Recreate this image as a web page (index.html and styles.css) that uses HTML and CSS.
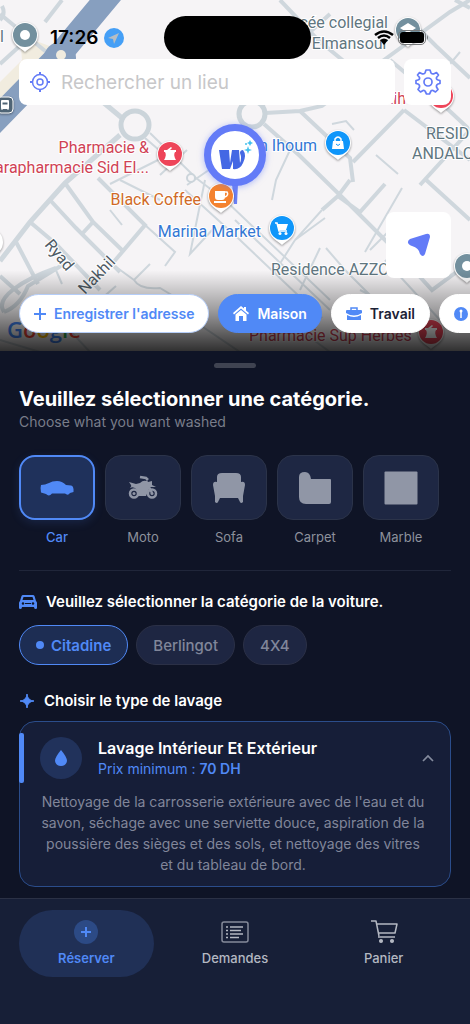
FILE: index.html
```html
<!doctype html>
<html lang="fr">
    <head>
        <meta charset="utf-8" />
        <meta content="width=device-width,initial-scale=1.0" name="viewport" />
        <title>Réserver</title>
        <link rel="stylesheet" href="styles.css">
    </head>
    <body>
        <div class="app">
            <section class="map">
                <svg class="map__canvas" viewBox="0 0 470 351" preserveAspectRatio="xMidYMid slice" role="img" aria-label="Carte">
                    <rect width="470" height="352" fill="#f6f4f6" />
                    <path d="M20 35L55 48L45 90L0 98V82L22 60Z" fill="#f1ecdf" />
                    <!-- streets -->
                    <g class="map__roads">
                        <path d="M0 14L50 55M0 64L34 33M0 20Q6 14 2 6M62 0L45 22" stroke-width="4" />
                        <path d="M104 103L122 118M120 135L65 183L30 222L0 261" stroke-width="5" />
                        <path d="M65 183L93 222L124 252M98 178L145 225L112 264M93 222L81 235M50 200L76 228L120 272M30 222L56 244L100 290M15 240L38 284M0 276L20 294" stroke-width="4" />
                        <path d="M4 312C-6 298 22 280 56 268M4 312Q20 306 28 286L64 264" stroke-width="4" />
                        <path d="M145 138L166 156M150 133L196 178M160 175L187 150M166 156L110 184M187 185L238 150M196 178L225 200L330 300M185 190L240 240L322 318" stroke-width="2" />
                        <path d="M145 225L175 252L165 266M112 264L134 280L150 264M134 280Q140 290 160 288L180 300M120 180L160 200M205 180L190 254L214 228M110 210L122 225M55 268L62 284M116 286L100 300" stroke-width="2" />
                        <path d="M265 113L300 111L322 106L362 76L450 12L470 0M455 0L470 8M300 111L350 158L353 182M353 162L404 110M404 110L470 160M390 60L440 102L470 130M280 0L318 40L362 76M410 20L436 46L470 78M290 50L330 14M262 106L295 70M248 130L232 150" stroke-width="4" />
                        <path d="M332 124L346 121L354 130M376 155L398 174M240 50L260 70" stroke-width="2" />
                        <path d="M420 185L470 130M264 124L300 156L345 200L400 255L432 290L470 262M350 180L338 196L360 212L385 184M338 196L322 210M424 178L470 220" stroke-width="4" />
                        <path d="M272 200L276 180L290 150M240 60L250 78M322 210L295 240L272 276M326 248L345 270L405 330M295 240L325 218M365 252L402 188M370 250L390 230M385 260L440 320M320 248L300 290M450 64L460 52M235 220L330 310M360 290L380 300L366 312" stroke-width="2" />
                        <path d="M0 340L40 352M60 320L90 352M200 325L240 352M300 330L330 352" stroke-width="2" />
                    </g>
                    <g fill="#f6f4f6" stroke="#cbd4da" stroke-width="5">
                        <circle cx="135" cy="125" r="14" />
                        <circle cx="252" cy="114" r="13" />
                        <circle cx="191" cy="178" r="4" stroke-width="2" />
                    </g>
                    <path d="M112 -8L62 52L-10 126" fill="none" stroke="#879fbf" stroke-width="24" />
                    <circle cx="60" cy="58" r="16" fill="#879fbf" />
                    <circle cx="61" cy="55" r="5" fill="#f1ecdf" />

                    <defs>
                        <path id="pin" d="M0 16C-4 12 -13 9 -13 -1A13 13 0 0 1 13 -1C13 9 4 12 0 16Z" />
                    </defs>

                    <g class="map__labels">
                        <text x="0" y="42" fill="#5f7680">l</text>
                        <text x="388" y="28" text-anchor="end" fill="#5f7680">cée collegial</text>
                        <text x="388" y="49" text-anchor="end" fill="#5f7680">o Elmansour</text>
                        <text x="149" y="153" text-anchor="end" fill="#d04255">Pharmacie &amp;</text>
                        <text x="149" y="173" text-anchor="end" fill="#d04255">Parapharmacie Sid El...</text>
                        <text x="201" y="205" text-anchor="end" fill="#d06a27">Black Coffee</text>
                        <text x="261" y="237" text-anchor="end" fill="#3277d4">Marina Market</text>
                        <text x="317" y="151" text-anchor="end" fill="#3277d4">Ain Ihoum</text>
                        <text x="406" y="104" text-anchor="end" fill="#d04255">Fatih</text>
                        <text x="426" y="139" fill="#5f7680">RESIDENCE</text>
                        <text x="412" y="159" fill="#5f7680">ANDALOUS</text>
                        <text x="271" y="275" fill="#5f7680">Residence AZZOUZ</text>
                        <text x="249" y="341" fill="#d04255">Pharmacie Sup Herbes</text>
                        <text transform="translate(44 245) rotate(50)" fill="#4e5a64">Ryad</text>
                        <text transform="translate(85 295) rotate(-46)" fill="#4e5a64">Nakhil</text>
                    </g>
                    <text class="map__google" x="7" y="338"><tspan fill="#4285f4">G</tspan><tspan fill="#ea4335">o</tspan><tspan fill="#fbbc05">o</tspan><tspan fill="#4285f4">g</tspan><tspan fill="#34a853">l</tspan><tspan fill="#ea4335">e</tspan></text>

                    <g class="map__pin" transform="translate(25 36)">
                        <use href="#pin" fill="#fff" />
                        <circle cy="-1" r="12" fill="#73909e" />
                        <circle cy="-1" r="5" fill="#fff" />
                    </g>
                    <g class="map__pin" transform="translate(408 31)">
                        <use href="#pin" fill="#fff" />
                        <circle cy="-1" r="12" fill="#73909e" />
                        <path d="M-8 -3L0 -8L8 -3L0 2ZM-5 1L0 4L5 1V4H-5Z" fill="#fff" />
                    </g>
                    <g class="map__pin" transform="translate(338 144)">
                        <use href="#pin" fill="#fff" />
                        <circle cy="-1" r="12" fill="#0f96fa" />
                        <path d="M-5 -3H5L6 5H-6Z" fill="#fff" />
                        <path d="M-3 -2V-5Q0 -9 3 -5V-2" fill="none" stroke="#fff" stroke-width="1.5" />
                        <path d="M-2 0Q0 3 2 0" fill="none" stroke="#0f96fa" />
                    </g>
                    <g class="map__pin" transform="translate(282 229)">
                        <use href="#pin" fill="#fff" />
                        <circle cy="-1" r="12" fill="#0f96fa" />
                        <path d="M-7 -6H-5L-3 2H5" fill="none" stroke="#fff" stroke-width="1.5" />
                        <path d="M-5 -5H6L4 1H-3Z" fill="#fff" />
                        <circle cx="-2" cy="4.5" r="1.5" fill="#fff" />
                        <circle cx="4" cy="4.5" r="1.5" fill="#fff" />
                    </g>
                    <g class="map__pin" transform="translate(170 155)">
                        <use href="#pin" fill="#fff" />
                        <circle cy="-1" r="12" fill="#ee4559" />
                        <path d="M-6 -5H-3L1 -8L2 -7L0 -5H6V-3H5Q3 0 6 5H-6Q-3 0 -5 -3H-6Z" fill="#fff" />
                    </g>
                    <g class="map__pin" transform="translate(431 333)">
                        <use href="#pin" fill="#fff" />
                        <circle cy="-1" r="12" fill="#ee4559" />
                        <path d="M-6 -5H-3L1 -8L2 -7L0 -5H6V-3H5Q3 0 6 5H-6Q-3 0 -5 -3H-6Z" fill="#fff" />
                    </g>
                    <g class="map__pin" transform="translate(441 97)">
                        <use href="#pin" fill="#fff" />
                        <circle cy="-1" r="12" fill="#ee4559" />
                        <circle cx="-2" cy="-3" r="9" fill="#fff" />
                    </g>
                    <g class="map__pin" transform="translate(467 267)">
                        <use href="#pin" fill="#fff" />
                        <circle cy="-1" r="12" fill="#73909e" />
                        <circle cy="-1" r="5" fill="#fff" />
                    </g>
                    <g class="map__pin" transform="translate(-10 243)">
                        <use href="#pin" fill="#fff" />
                    </g>
                    <g class="map__pin">
                        <rect x="-3" y="97" width="16" height="16" rx="4" fill="#4f6475" stroke="#fff" />
                        <rect x="1" y="100" width="8" height="9" rx="1" fill="#fff" />
                        <path d="M2 102H8V105H2ZM2 110V108M8 110V108" fill="#4f6475" stroke="#fff" />
                    </g>

                    <!-- selected position -->
                    <path d="M232 184H238L237 204H234Z" fill="#6b80f5" />
                    <g class="map__pin" transform="translate(221 197)">
                        <use href="#pin" fill="#fff" />
                        <circle cy="-1" r="12" fill="#f4822f" />
                        <path d="M-6 -6H4V0Q4 3 1 3H-3Q-6 3 -6 0ZM-7 4H5V6H-7Z" fill="#fff" />
                        <path d="M4 -5H6Q8 -2 4 0" fill="none" stroke="#fff" stroke-width="1.5" />
                    </g>
                    <circle class="map__marker" cx="235" cy="155" r="27.5" fill="#fff" stroke="#637bf7" stroke-width="7" />
                    <path d="M219 150H229L230 163L232 150H239L240 163Q242 158 240 153Q240 150 243 150Q247 155 243 163Q240 170 233 169V161L230 169H222Z" fill="#4468e4" />
                    <path d="M248 146L249 149L252 150L249 151L248 154L247 151L244 150L247 149ZM250 140L251 142L253 143L251 144L250 146L249 144L247 143L249 142Z" fill="#43c0ed" />
                    <circle cx="246" cy="144" r="1" fill="#43c0ed" />
                </svg>
                <div class="map__fade"></div>

                <header class="status">
                    <span class="status__time">17:26</span>
                    <svg class="status__gps" width="20" height="20" viewBox="0 0 20 20"><circle cx="10" cy="10" r="10" fill="#459ff6" /><path d="M15 5L4 10L9 11L10 16Z" fill="#b6bdc3" /></svg>
                    <span class="status__island"></span>
                    <svg class="status__wifi" width="20" height="15" viewBox="0 0 20 15"><path d="M1 5Q10 -2 19 5M4 8Q10 3 16 8" fill="none" stroke="#000" stroke-width="2.5" /><path d="M6 10Q10 7 14 10L10 15Z" /></svg>
                    <svg class="status__battery" width="31" height="15" viewBox="0 0 31 15"><rect x=".5" y=".5" width="27" height="14" rx="4.5" fill="none" stroke="#77797b" /><rect x="2" y="2" width="24" height="11" rx="3" /><path d="M29 5Q31 7.5 29 10Z" fill="#77797b" /></svg>
                </header>

                <div class="search">
                    <label class="search__box">
                        <svg width="22" height="22" viewBox="0 0 22 22" fill="none" stroke="#637bf7" stroke-width="1.5" aria-hidden="true"><circle cx="11" cy="11" r="7.5" /><circle cx="11" cy="11" r="3" /><path d="M11 1V4M11 18V21M1 11H4M18 11H21" stroke-width="2" /></svg>
                        <input class="search__input" type="text" placeholder="Rechercher un lieu" aria-label="Rechercher un lieu" />
                    </label>
                    <button class="search__settings" type="button" aria-label="Paramètres">
                        <svg width="28" height="28" viewBox="0 0 28 28" fill="none" stroke="#637bf7" stroke-width="1.7" stroke-linejoin="round"><path d="M12 2H16L17 5Q18.500 6.500 20.500 5.500L22.500 4.500L24.500 7L22.500 9.500Q22 11.500 24 12L26 12.500V15.500L24 16Q22 17 22.500 19L24 21.500L21.500 24L19 22.500Q17 22 16.500 24L15.500 26H12.500L11.500 24Q11 22 9 22.500L6.500 24L4 21.500L5.500 19Q6 17 4 16L2 15.500V12.500L4 12Q6 11.500 5.500 9.500L3.500 7L5.500 4.500L7.500 5.500Q9.500 6.500 11 5Z" /><circle cx="14" cy="14" r="4" /></svg>
                    </button>
                </div>

                <button class="locate" type="button" aria-label="Ma position">
                    <svg width="24" height="24" viewBox="0 0 24 24"><path d="M19 1Q23 0 23 4L18 21Q16 25 13 21Q12 15 5 13Q-2 10 3 6Z" fill="#637bf7" /></svg>
                </button>

                <div class="places">
                    <button class="place place--add" type="button">
                        <svg width="12" height="12" viewBox="0 0 12 12"><path d="M6 0V12M0 6H12" stroke="#5089f6" stroke-width="2" /></svg>
                        Enregistrer l'adresse
                    </button>
                    <button class="place place--active" type="button">
                        <svg width="16" height="16" viewBox="0 0 16 16" fill="#fff"><path d="M0 7L8 0L11 2.500V1H13V4.500L16 7L15 8.500L8 2.500L1 8.500Z" /><path d="M2.500 8.500L8 4L13.500 8.500V15H10V10H6V15H2.500Z" /></svg>
                        Maison
                    </button>
                    <button class="place" type="button">
                        <svg width="16" height="14" viewBox="0 0 16 14" fill="#5089f6"><path d="M5 3V1H11V3" fill="none" stroke="#5089f6" stroke-width="1.5" /><path d="M0 4Q0 3 1 3H15Q16 3 16 4V6Q8 11 0 6Z" /><path d="M1 8Q8 12 15 8V13H1Z" /></svg>
                        Travail
                    </button>
                    <button class="place" type="button">
                        <svg width="14" height="14" viewBox="0 0 14 14"><circle cx="7" cy="7" r="7" fill="#5089f6" /><path d="M7 5V11" stroke="#fff" stroke-width="1.5" /><circle cx="7" cy="4" r="1.5" fill="#fff" /></svg>
                        Autre
                    </button>
                </div>
            </section>

            <main class="sheet">
                <div class="sheet__handle"></div>
                <h1 class="sheet__title">Veuillez sélectionner une catégorie.</h1>
                <p class="sheet__subtitle">Choose what you want washed</p>

                <div class="categories">
                    <button class="category category--active" type="button">
                        <span class="category__tile">
                            <svg width="34" height="34" viewBox="0 0 34 34" fill="#5089f6"><path d="M1 14Q5 14 9 12Q12 10 17 10Q22 10 26 14L31 14.500Q34 15 33.500 21L30 22Q28 25 25 22.500H12Q9 26 6 23L1 21.500Q0 17 1 14Z" /></svg>
                        </span>
                        Car
                    </button>
                    <button class="category" type="button">
                        <span class="category__tile">
                            <svg width="34" height="34" viewBox="0 0 34 34" fill="#9096a6"><g fill="none" stroke="#9096a6" stroke-width="2.5"><circle cx="8" cy="22.5" r="4" /><circle cx="26" cy="22.5" r="4" /><path d="M20 10L26 22M14 6L20 7L22 9" /></g><circle cx="8" cy="22.5" r="1.5" /><circle cx="26" cy="22.5" r="1.5" /><path d="M3 11L10 13L14 12Q18 8 22 11L26 10V14L30 16L24 16L20 25H12L11 19Q8 15 4 17Q6 15 5 14Z" /></svg>
                        </span>
                        Moto
                    </button>
                    <button class="category" type="button">
                        <span class="category__tile">
                            <svg width="34" height="34" viewBox="0 0 34 34" fill="#9096a6"><path d="M5 6Q5 2 10 2H24Q29 2 29 6V11Q33 10 33 14L31 25V31Q29 33 28 31L26 27H8L6 31Q5 33 3 31V25L1 14Q1 10 5 11Z" /></svg>
                        </span>
                        Sofa
                    </button>
                    <button class="category" type="button">
                        <span class="category__tile">
                            <svg width="34" height="34" viewBox="0 0 34 34" fill="#9096a6"><path d="M1 6Q1 1 7 1Q12 1 13 8H32Q33 8 33 9V31Q33 33 31 33H8Q1 33 1 26Z" /></svg>
                        </span>
                        Carpet
                    </button>
                    <button class="category" type="button">
                        <span class="category__tile">
                            <svg width="34" height="34" viewBox="0 0 34 34" fill="#9096a6"><rect x=".5" y=".5" width="33" height="33" rx="1" /></svg>
                        </span>
                        Marble
                    </button>
                </div>

                <h2 class="section-title section-title--car">
                    <svg width="18" height="14" viewBox="0 0 18 14" fill="#5089f6"><path d="M4 0H14Q15 0 15.500 1L17 6Q18 7 18 8V13Q18 14 16.500 14Q15 14 15 12H3Q3 14 1.500 14Q0 14 0 13V8Q0 7 1 6L2.500 1Q3 0 4 0ZM4.500 2L3.500 5H14.500L13.500 2Z" fill-rule="evenodd" /><g fill="#0f1426"><circle cx="4" cy="8.5" r="1.2" /><circle cx="14" cy="8.5" r="1.2" /><path d="M6 8H12V9H6Z" /></g></svg>
                    Veuillez sélectionner la catégorie de la voiture.
                </h2>
                <div class="types">
                    <button class="type type--active" type="button">Citadine</button>
                    <button class="type" type="button">Berlingot</button>
                    <button class="type" type="button">4X4</button>
                </div>

                <h2 class="section-title">
                    <svg width="16" height="16" viewBox="0 0 16 16" fill="#5089f6"><path d="M8 1Q8.500 7.500 15 8Q8.500 8.500 8 15Q7.500 8.500 1 8Q7.500 7.500 8 1Z" stroke="#5089f6" /></svg>
                    Choisir le type de lavage
                </h2>
                <article class="wash">
                    <button class="wash__head" type="button" aria-expanded="true">
                        <span class="wash__icon">
                            <svg width="12" height="18" viewBox="0 0 12 18"><path d="M6 1Q12 8 12 12Q11 17 6 17Q1 17 0 12Q0 8 6 1Z" fill="#5089f6" /></svg>
                        </span>
                        <span class="wash__text">
                            <span class="wash__name">Lavage Intérieur Et Extérieur</span>
                            <span class="wash__price">Prix minimum : <b>70 DH</b></span>
                        </span>
                        <svg width="12" height="8" viewBox="0 0 12 8" fill="none" stroke="#858c9e" stroke-width="1.7"><path d="M1 7L6 2L11 7" /></svg>
                    </button>
                    <p class="wash__desc">Nettoyage de la carrosserie extérieure avec de l'eau et du savon, séchage avec une serviette douce, aspiration de la poussière des sièges et des sols, et nettoyage des vitres et du tableau de bord.</p>
                </article>
            </main>

            <nav class="tabs">
                <a class="tab tab--active" href="#reserver">
                    <svg width="28" height="24" viewBox="0 0 28 24"><circle cx="14" cy="12" r="12" fill="#2c4a85" /><path d="M14 7V17M9 12H19" stroke="#5089f6" stroke-width="2" /></svg>
                    Réserver
                </a>
                <a class="tab" href="#demandes">
                    <svg width="28" height="24" viewBox="0 0 28 24" fill="none" stroke="#b4b8c2"><rect x="1" y="2" width="26" height="20" rx="2" stroke="#858a9a" stroke-width="1.5" /><path d="M9 7H22M9 10.500H20M9 14H22M9 17.500H18M5 7H7M5 10.500H7M5 14H7M5 17.500H7" stroke-width="1.5" /></svg>
                    Demandes
                </a>
                <a class="tab" href="#panier">
                    <svg width="28" height="24" viewBox="0 0 28 24" fill="none" stroke="#b4b8c2" stroke-width="1.5" stroke-linejoin="round"><path d="M1 1H6L9 16M7 4H27L25 13H8M8 17H25" /><circle cx="11" cy="21" r="1.3" fill="#b4b8c2" /><circle cx="22" cy="21" r="1.3" fill="#b4b8c2" /></svg>
                    Panier
                </a>
            </nav>
        </div>
    </body>
</html>
```

FILE: styles.css
```css
* {
    box-sizing: border-box;
}

body {
    margin: 0;
    background: #0f1426;
    color: #fff;
    font-family: Inter, 'Liberation Sans', sans-serif;
}

button,
input {
    border: 0;
    padding: 0;
    background: none;
    color: inherit;
    font: inherit;
}

svg {
    flex-shrink: 0;
}

.app {
    display: flex;
    flex-direction: column;
    min-height: 100vh;
}

/* map */
.map {
    position: relative;
    display: flex;
    flex-direction: column;
    padding: 0 19px 18px;
    overflow: hidden;
}

.map__canvas,
.map__fade {
    position: absolute;
    top: 0;
    left: 0;
    width: 100%;
    height: 100%;
}

.map__fade {
    background: linear-gradient(transparent 77%, rgba(0, 0, 0, 0.35) 88%, rgba(0, 0, 0, 0.8));
}

.map__roads {
    fill: none;
    stroke: #cfd7dd;
}

.map__labels {
    font-family: Roboto, sans-serif;
    font-size: 16px;
    paint-order: stroke;
    stroke: #fff;
    stroke-width: 2px;
}

.map__google {
    font-family: 'Open Sans', sans-serif;
    font-size: 22px;
    font-weight: 600;
}

.map__pin {
    filter: drop-shadow(0 1px 1px rgba(0, 0, 0, 0.4));
}

.map__marker {
    filter: drop-shadow(0 1px 3px rgba(99, 123, 247, 0.5));
}

.status {
    position: relative;
    display: grid;
    grid-template-columns: 50px 1fr 147px 1fr 20px 31px;
    align-items: center;
    height: 59px;
    padding: 16px 41px 0 50px;
    column-gap: 4px;
    color: #000;
}

.map .status {
    margin: 0 -19px;
}

.status__time {
    font-size: 19px;
    font-weight: 600;
}

.status__island {
    height: 43px;
    border-radius: 22px;
    background: #000;
}

.status__wifi {
    grid-column: 5;
}

.status__battery {
    justify-self: end;
}

.search {
    position: relative;
    display: flex;
    gap: 9px;
}

.search__box {
    flex: 1;
    display: flex;
    align-items: center;
    gap: 10px;
    height: 46px;
    padding: 0 10px;
    border-radius: 8px;
    background: #fff;
}

.search__input {
    flex: 1;
    min-width: 0;
    color: #222;
    font-size: 19px;
    outline: 0;
}

.search__input::placeholder {
    color: #c7c7c9;
    opacity: 1;
}

.search__settings {
    display: grid;
    place-items: center;
    width: 47px;
    border-radius: 8px;
    background: #fff;
}

.locate {
    position: relative;
    display: grid;
    place-items: center;
    align-self: flex-end;
    width: 65px;
    height: 66px;
    margin-top: 107px;
    border-radius: 8px;
    background: #fff;
}

.places {
    position: relative;
    display: flex;
    gap: 9px;
    margin: 16px -19px 0 0;
    overflow: hidden;
}

.place {
    display: flex;
    flex-shrink: 0;
    align-items: center;
    gap: 8px;
    height: 39px;
    padding: 0 14px;
    border: 1px solid #fff;
    border-radius: 20px;
    background: #fff;
    color: #1b2236;
    font-size: 14px;
    font-weight: 600;
}

.place--add {
    border-color: #b5cdf8;
    color: #5089f6;
}

.place--active {
    border-color: #5089f6;
    background: #5089f6;
    color: #fff;
}

/* booking sheet */
.sheet {
    flex: 1;
    padding: 12px 19px 11px;
}

.sheet__handle {
    width: 42px;
    height: 5px;
    margin: 0 auto 18px;
    border-radius: 3px;
    background: #3f4351;
}

.sheet__title {
    margin: 0;
    font-size: 20px;
    line-height: 26px;
    font-weight: 700;
}

.sheet__subtitle {
    margin: 0;
    color: #797d8a;
    font-size: 14px;
    line-height: 20px;
}

.categories {
    display: flex;
    gap: 10px;
    padding: 23px 0 24px;
    border-bottom: 1px solid #20263a;
}

.category {
    display: flex;
    flex-direction: column;
    gap: 8px;
    width: 76px;
    color: #8d919c;
    font-size: 13px;
    line-height: 18px;
}

.category__tile {
    display: grid;
    place-items: center;
    width: 100%;
    height: 65px;
    border: 1px solid #2b3349;
    border-radius: 16px;
    background: #1e2743;
}

.category--active {
    color: #5089f6;
    font-weight: 500;
}

.category--active .category__tile {
    border: 2px solid #5089f6;
    background: #1f315b;
    box-shadow: 0 3px 10px rgba(80, 137, 246, 0.15);
}

.section-title {
    display: flex;
    align-items: center;
    gap: 9px;
    margin: 26px 0 10px;
    font-size: 15px;
    line-height: 20px;
    font-weight: 600;
}

.section-title--car {
    margin: 21px 0 13px;
}

.types {
    display: flex;
    gap: 8px;
}

.type {
    display: flex;
    align-items: center;
    gap: 7px;
    height: 40px;
    padding: 0 16px;
    border: 1px solid #2b3046;
    border-radius: 20px;
    background: #1e2642;
    color: #81869a;
    font-size: 15px;
    font-weight: 500;
}

.type--active {
    border-color: #5089f6;
    background: #1d2d53;
    color: #5089f6;
    font-weight: 600;
}

.type--active::before {
    content: '';
    width: 8px;
    height: 8px;
    border-radius: 50%;
    background: #5089f6;
}

.wash {
    position: relative;
    padding: 15px 16px 11px 20px;
    border: 1px solid #2b4d8b;
    border-radius: 16px;
    background: #161e38;
}

.wash::before {
    content: '';
    position: absolute;
    top: 11px;
    left: -1px;
    width: 5px;
    height: 50px;
    border-radius: 2px;
    background: #5089f6;
}

.wash__head {
    display: flex;
    align-items: center;
    gap: 16px;
    width: 100%;
    text-align: left;
}

.wash__icon {
    display: grid;
    place-items: center;
    width: 42px;
    height: 42px;
    border-radius: 50%;
    background: #21325b;
}

.wash__text {
    flex: 1;
    display: flex;
    flex-direction: column;
}

.wash__name {
    font-size: 16px;
    line-height: 22px;
    font-weight: 600;
}

.wash__price {
    color: #5089f6;
    font-size: 14px;
    line-height: 20px;
}

.wash__price b {
    font-weight: 600;
}

.wash__desc {
    margin: 12px 0 0;
    padding-right: 8px;
    color: #81869a;
    font-size: 14px;
    line-height: 21px;
    text-align: center;
}

/* bottom navigation */
.tabs {
    display: grid;
    grid-template-columns: repeat(3, 1fr);
    gap: 14px;
    padding: 11px 19px 47px;
    border-top: 1px solid #2b3145;
    background: #171f37;
}

.tab {
    display: flex;
    flex-direction: column;
    align-items: center;
    justify-content: center;
    gap: 5px;
    height: 67px;
    border-radius: 34px;
    color: #b4b8c2;
    font-size: 13px;
    line-height: 18px;
    font-weight: 500;
    text-decoration: none;
}

.tab--active {
    background: #203056;
    color: #5089f6;
    font-weight: 600;
}
```
